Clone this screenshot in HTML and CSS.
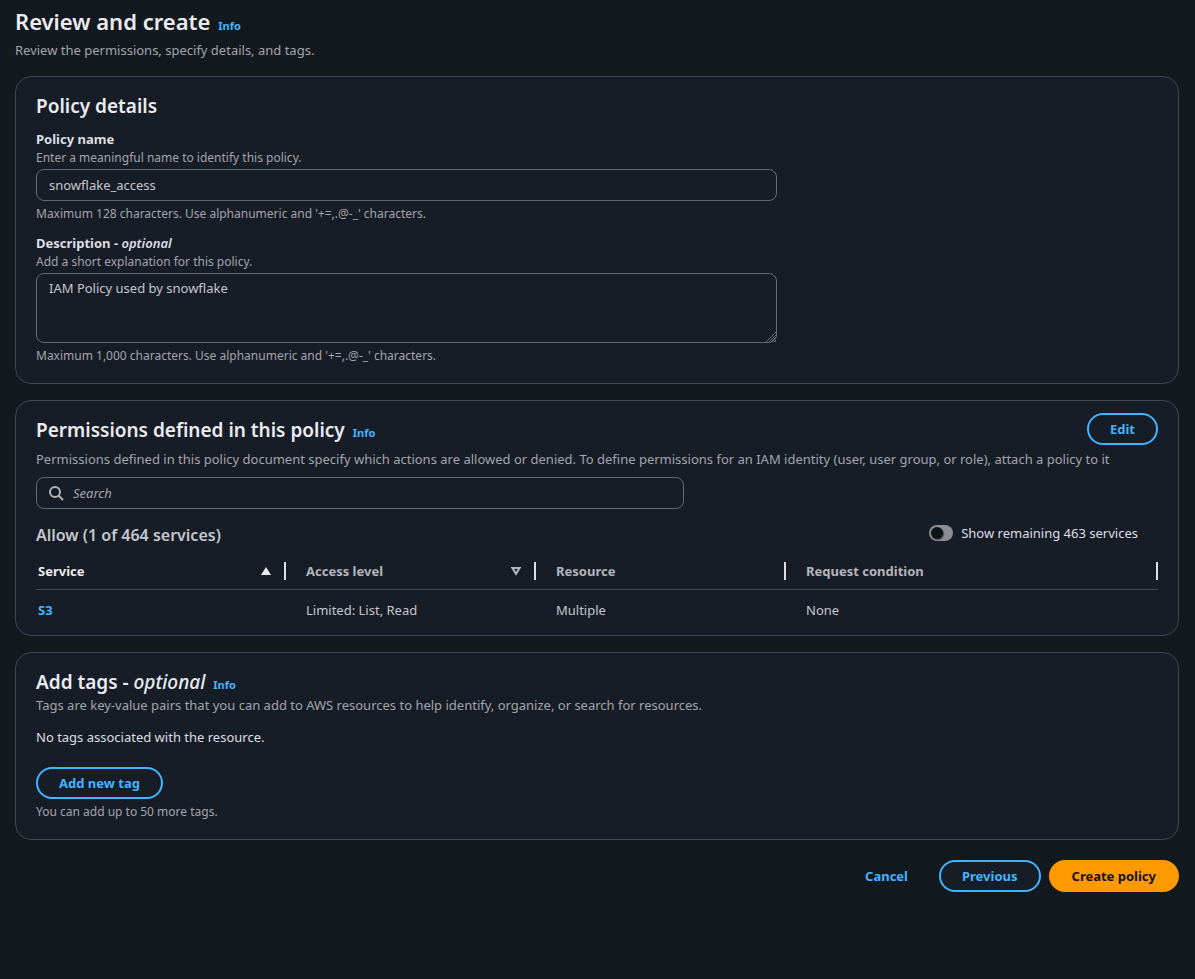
FILE: index.html
```html
<!DOCTYPE html>
<html lang="en">
<head>
<meta charset="utf-8">
<meta name="viewport" content="width=device-width, initial-scale=1">
<title>Review and create</title>
<link rel="stylesheet" href="styles.css">
</head>
<body>
<main class="page">
  <header class="page-header">
    <div class="title-row">
      <h1 class="page-title">Review and create</h1>
      <a class="info" href="#">Info</a>
    </div>
    <p class="muted">Review the permissions, specify details, and tags.</p>
  </header>

  <section class="card">
    <h2 class="card-title">Policy details</h2>
    <div class="fields">
      <div class="field">
        <label class="label" for="policy-name">Policy name</label>
        <p class="hint">Enter a meaningful name to identify this policy.</p>
        <input class="control" id="policy-name" type="text" value="snowflake_access">
        <p class="hint constraint">Maximum 128 characters. Use alphanumeric and '+=,.@-_' characters.</p>
      </div>
      <div class="field">
        <label class="label" for="description">Description - <em>optional</em></label>
        <p class="hint">Add a short explanation for this policy.</p>
        <textarea class="control control-area" id="description">IAM Policy used by snowflake</textarea>
        <p class="hint constraint">Maximum 1,000 characters. Use alphanumeric and '+=,.@-_' characters.</p>
      </div>
    </div>
  </section>

  <section class="card card-permissions">
    <div class="card-head">
      <div class="title-row">
        <h2 class="card-title">Permissions defined in this policy</h2>
        <a class="info" href="#">Info</a>
      </div>
      <button class="button" type="button">Edit</button>
    </div>
    <p class="muted single-line">Permissions defined in this policy document specify which actions are allowed or denied. To define permissions for an IAM identity (user, user group, or role), attach a policy to it</p>
    <label class="search">
      <svg class="search-icon" viewBox="0 0 16 16" aria-hidden="true"><circle cx="7" cy="7" r="5"/><path d="M10.6 10.6 15 15"/></svg>
      <input class="search-input" type="search" placeholder="Search" aria-label="Search">
    </label>
    <div class="allow-row">
      <h3 class="allow-title">Allow (1 of 464 services)</h3>
      <label class="toggle"><input class="switch" type="checkbox" role="switch">Show remaining 463 services</label>
    </div>
    <table class="table">
      <thead>
        <tr>
          <th class="sorted"><div class="th"><span>Service</span><svg class="sort" viewBox="0 0 16 16" aria-hidden="true"><path class="solid" d="M8 4 13 12H3z"/></svg></div></th>
          <th><div class="th"><span>Access level</span><svg class="sort" viewBox="0 0 16 16" aria-hidden="true"><path class="hollow" d="M4.4 5h7.2L8 10.8z"/></svg></div></th>
          <th><div class="th">Resource</div></th>
          <th><div class="th">Request condition</div></th>
        </tr>
      </thead>
      <tbody>
        <tr>
          <td><a class="service" href="#">S3</a></td>
          <td>Limited: List, Read</td>
          <td>Multiple</td>
          <td>None</td>
        </tr>
      </tbody>
    </table>
  </section>

  <section class="card card-tags">
    <div class="title-row">
      <h2 class="card-title">Add tags - <em>optional</em></h2>
      <a class="info" href="#">Info</a>
    </div>
    <p class="muted">Tags are key-value pairs that you can add to AWS resources to help identify, organize, or search for resources.</p>
    <p class="no-tags">No tags associated with the resource.</p>
    <button class="button" type="button">Add new tag</button>
    <p class="hint constraint">You can add up to 50 more tags.</p>
  </section>

  <footer class="actions">
    <button class="button button-link" type="button">Cancel</button>
    <button class="button" type="button">Previous</button>
    <button class="button button-primary" type="submit">Create policy</button>
  </footer>
</main>
</body>
</html>
```
FILE: styles.css
```css
* { box-sizing: border-box; }

body {
  margin: 0;
  background: #12191f;
  color: #c6c6cd;
  font: 13px/20px "Noto Sans", "Open Sans", sans-serif;
}

h1, h2, h3, p { margin: 0; }
a { color: #42b4ff; text-decoration: none; font-weight: 700; }
input, textarea, button { font: inherit; color: inherit; }

.page { padding: 7px 16px 24px 15px; }
.page-header { margin-bottom: 16px; }

.title-row { display: flex; align-items: baseline; gap: 8px; }
.page-title { color: #ebebf0; font: 600 22px/28px "Noto Sans", sans-serif; }
.page-header .muted { margin-top: 5px; }
.card-title { color: #ebebf0; font: 600 19px/24px "Noto Sans", sans-serif; }
.card-title em { font-weight: 500; }
.info { font-size: 11px; line-height: 16px; }
.muted { color: #a4a4ad; }

.card {
  margin-bottom: 16px;
  padding: 17px 20px 19px;
  background: #161d26;
  border: 1px solid #424650;
  border-radius: 16px;
}

.fields { display: flex; flex-direction: column; gap: 11px; width: 66%; margin-top: 11px; }
.field { display: flex; flex-direction: column; }
.label { margin-bottom: 1px; color: #dedee3; font-weight: 700; }
.label em { font-weight: 600; }
.hint { color: #a4a4ad; font-size: 12px; line-height: 16px; }
.constraint { margin-top: 5px; }

.control {
  width: 100%;
  height: 32px;
  margin-top: 3px;
  padding: 0 12px;
  background: #161d26;
  border: 1px solid #656871;
  border-radius: 8px;
  outline: none;
}
.control-area { display: block; height: 70px; padding: 4px 12px; resize: both; }
.control-area::-webkit-resizer {
  background:
    linear-gradient(135deg, #161d26 50%, transparent 50%) bottom right / 11px 11px no-repeat,
    repeating-linear-gradient(135deg, #656871 0 1px, #161d26 1px 2px) bottom right / 11px 11px no-repeat;
}

.button {
  height: 32px;
  padding: 0 21px;
  background: #161d26;
  border: 2px solid #42b4ff;
  border-radius: 16px;
  color: #42b4ff;
  font-weight: 700;
  cursor: pointer;
}
.button-link { background: transparent; border-color: transparent; }
.button-primary { background: #ff9900; border-color: #ff9900; color: #0f141a; }

.card-permissions { padding: 12px 20px 4px; }
.card-head { display: flex; justify-content: space-between; align-items: center; }
.card-head .title-row { padding-top: 2px; }
.single-line { margin-top: 4px; white-space: nowrap; overflow: hidden; }

.search {
  display: flex;
  align-items: center;
  gap: 9px;
  width: 648px;
  max-width: 100%;
  height: 32px;
  margin-top: 8px;
  padding: 0 11px;
  border: 1px solid #656871;
  border-radius: 8px;
}
.search-icon { width: 16px; height: 16px; fill: none; stroke: #b4b4bb; stroke-width: 2; }
.search-input { flex: 1; padding: 0; background: transparent; border: 0; outline: none; }
.search-input::placeholder { color: #a4a4ad; font-style: italic; opacity: 1; }

.allow-row { display: flex; justify-content: space-between; margin-top: 14px; padding-right: 20px; }
.allow-title { color: #c6c6cd; font: 600 16px/24px "Noto Sans", sans-serif; }
.toggle { display: flex; align-items: center; gap: 8px; height: 20px; color: #dedee3; }
.switch {
  appearance: none;
  width: 24px;
  height: 16px;
  margin: 0;
  padding: 2px;
  background: #8c8c94;
  border-radius: 8px;
}
.switch::before {
  content: "";
  display: block;
  width: 12px;
  height: 12px;
  background: #0f141a;
  border-radius: 50%;
  box-shadow: 1px 1px 1px #424650;
}

.table { width: 100%; margin-top: 6px; border-collapse: collapse; table-layout: fixed; text-align: left; }
.table th { width: 250px; padding: 0; border-bottom: 1px solid #424650; color: #b4b4bb; font-weight: 700; }
.table th:last-child { width: auto; }
.th {
  display: flex;
  align-items: center;
  justify-content: space-between;
  height: 18px;
  margin: 9px 0;
  padding: 0 10px 0 20px;
  border-right: 2px solid #dedee3;
}
.table th:first-child .th { padding-left: 2px; }
.table .sorted { color: #ebebf0; }
.sort { width: 16px; height: 16px; }
.solid { fill: #ebebf0; }
.hollow { fill: none; stroke: #b4b4bb; stroke-width: 2; }
.table td { height: 41px; padding: 0 20px; }
.table td:first-child { padding-left: 2px; }

.card-tags .muted { margin-top: 1px; }
.no-tags { margin: 12px 0 20px; color: #dedee3; }

.actions { display: flex; justify-content: flex-end; gap: 8px; margin-top: 20px; }
```
